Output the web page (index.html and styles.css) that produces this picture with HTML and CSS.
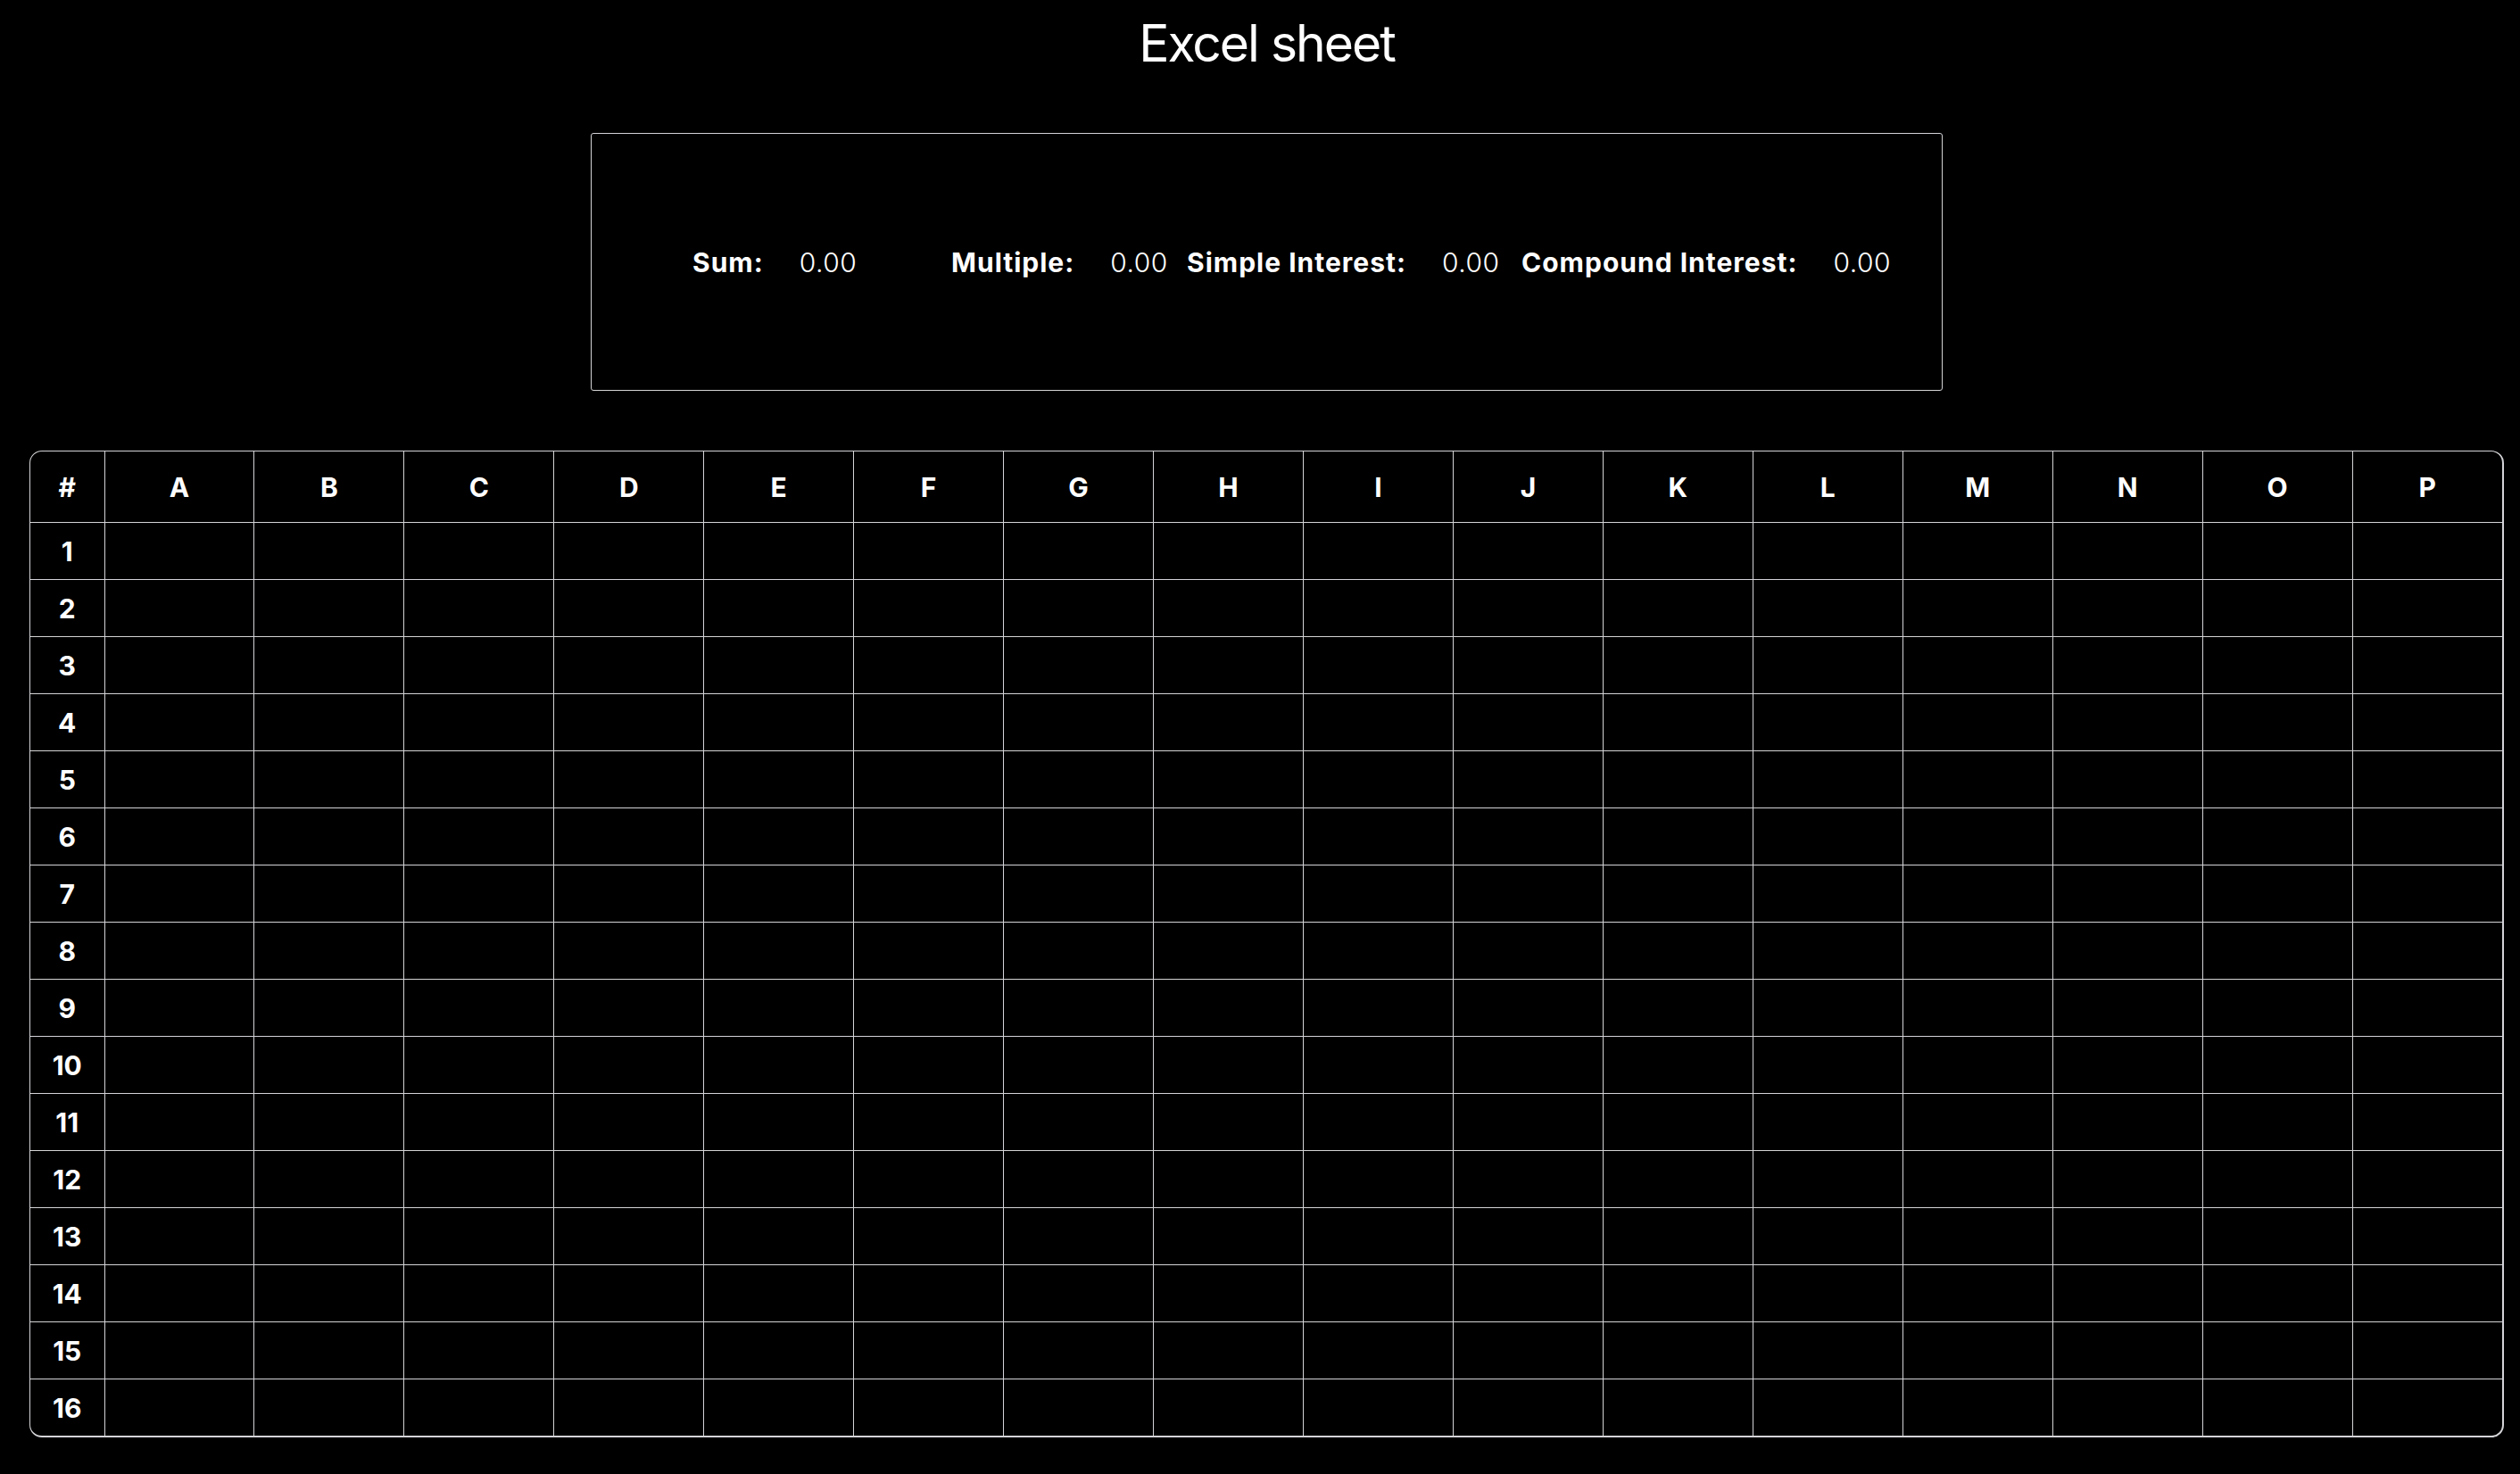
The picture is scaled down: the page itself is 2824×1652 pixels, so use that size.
FILE: index.html
```html
<!DOCTYPE html>
<html lang="en">

<head>
    <meta charset="UTF-8">
    <meta name="viewport" content="width=device-width, initial-scale=1.0">
    <title>Excel sheet</title>
    <link rel="stylesheet" href="styles.css">
</head>

<body>

    <h1 class="page-title">Excel sheet</h1>

    <div class="summary">
        <div class="stats">
            <div class="stat"><span class="stat-label">Sum:</span><span class="stat-value" id="sum">0.00</span></div>
            <div class="stat"><span class="stat-label">Multiple:</span><span class="stat-value" id="multiple">0.00</span></div>
            <div class="stat"><span class="stat-label">Simple Interest:</span><span class="stat-value" id="simple">0.00</span></div>
            <div class="stat"><span class="stat-label">Compound Interest:</span><span class="stat-value" id="compound">0.00</span></div>
        </div>
    </div>

    <div class="sheet-wrap">
        <table class="sheet">
            <colgroup>
                <col class="col-index">
            </colgroup>
            <thead>
                <tr id="headRow">
                    <th>#</th>
                </tr>
            </thead>
            <tbody id="sheetBody">
                <!-- rows are added by the script -->
            </tbody>
        </table>
    </div>

    <script>
        document.addEventListener('DOMContentLoaded', function () {
            var letters = 'ABCDEFGHIJKLMNOP'.split('');
            var rows = 16;

            var headRow = document.getElementById('headRow');
            letters.forEach(function (letter) {
                var th = document.createElement('th');
                th.textContent = letter;
                headRow.appendChild(th);
            });

            var body = document.getElementById('sheetBody');
            for (var r = 1; r <= rows; r++) {
                var tr = document.createElement('tr');

                var num = document.createElement('th');
                num.classList.add('row-num');
                num.textContent = r;
                tr.appendChild(num);

                letters.forEach(function () {
                    var td = document.createElement('td');
                    tr.appendChild(td);
                });

                body.appendChild(tr);
            }
        });
    </script>
</body>

</html>
```

FILE: styles.css
```css
body {
    margin: 0;
    padding: 14px 18px 40px 33px;
    background-color: #000;
    color: #fff;
    font-family: Inter, "Noto Sans", sans-serif;
}

.page-title {
    margin: 0;
    font-size: 57px;
    font-weight: 400;
    line-height: 70px;
    letter-spacing: -2px;
    text-align: center;
}

.summary {
    width: 1515px;
    height: 289px;
    box-sizing: border-box;
    margin: 65px auto 0;
    border: 1px solid #d4d4d8;
    border-radius: 3px;
    display: flex;
    align-items: center;
}

.stats {
    display: grid;
    grid-template-columns: 290px 264px 375px auto;
    padding-left: 113px;
}

.stat {
    display: flex;
    align-items: baseline;
    gap: 40px;
    font-size: 30px;
}

.stat-label {
    font-weight: 700;
    letter-spacing: 1px;
}

.stat-value {
    font-weight: 300;
    letter-spacing: 0.5px;
}

.sheet-wrap {
    margin-top: 67px;
    border: solid #d4d4d8;
    border-width: 1px 2px 2px 1px;
    border-radius: 14px;
    overflow: hidden;
}

.sheet {
    width: 100%;
    border-collapse: collapse;
    table-layout: fixed;
}

.col-index {
    width: 83px;
}

.sheet th,
.sheet td {
    border-right: 1px solid #d4d4d8;
    border-bottom: 1px solid #d4d4d8;
    padding: 0;
    text-align: center;
}

.sheet tr> :last-child {
    border-right: none;
}

.sheet tbody tr:last-child> * {
    border-bottom: none;
}

.sheet thead th {
    height: 79px;
    font-size: 30px;
    font-weight: 700;
}

.sheet tbody th,
.sheet tbody td {
    height: 63px;
}

.sheet .row-num {
    font-size: 30px;
    font-weight: 700;
}
```
